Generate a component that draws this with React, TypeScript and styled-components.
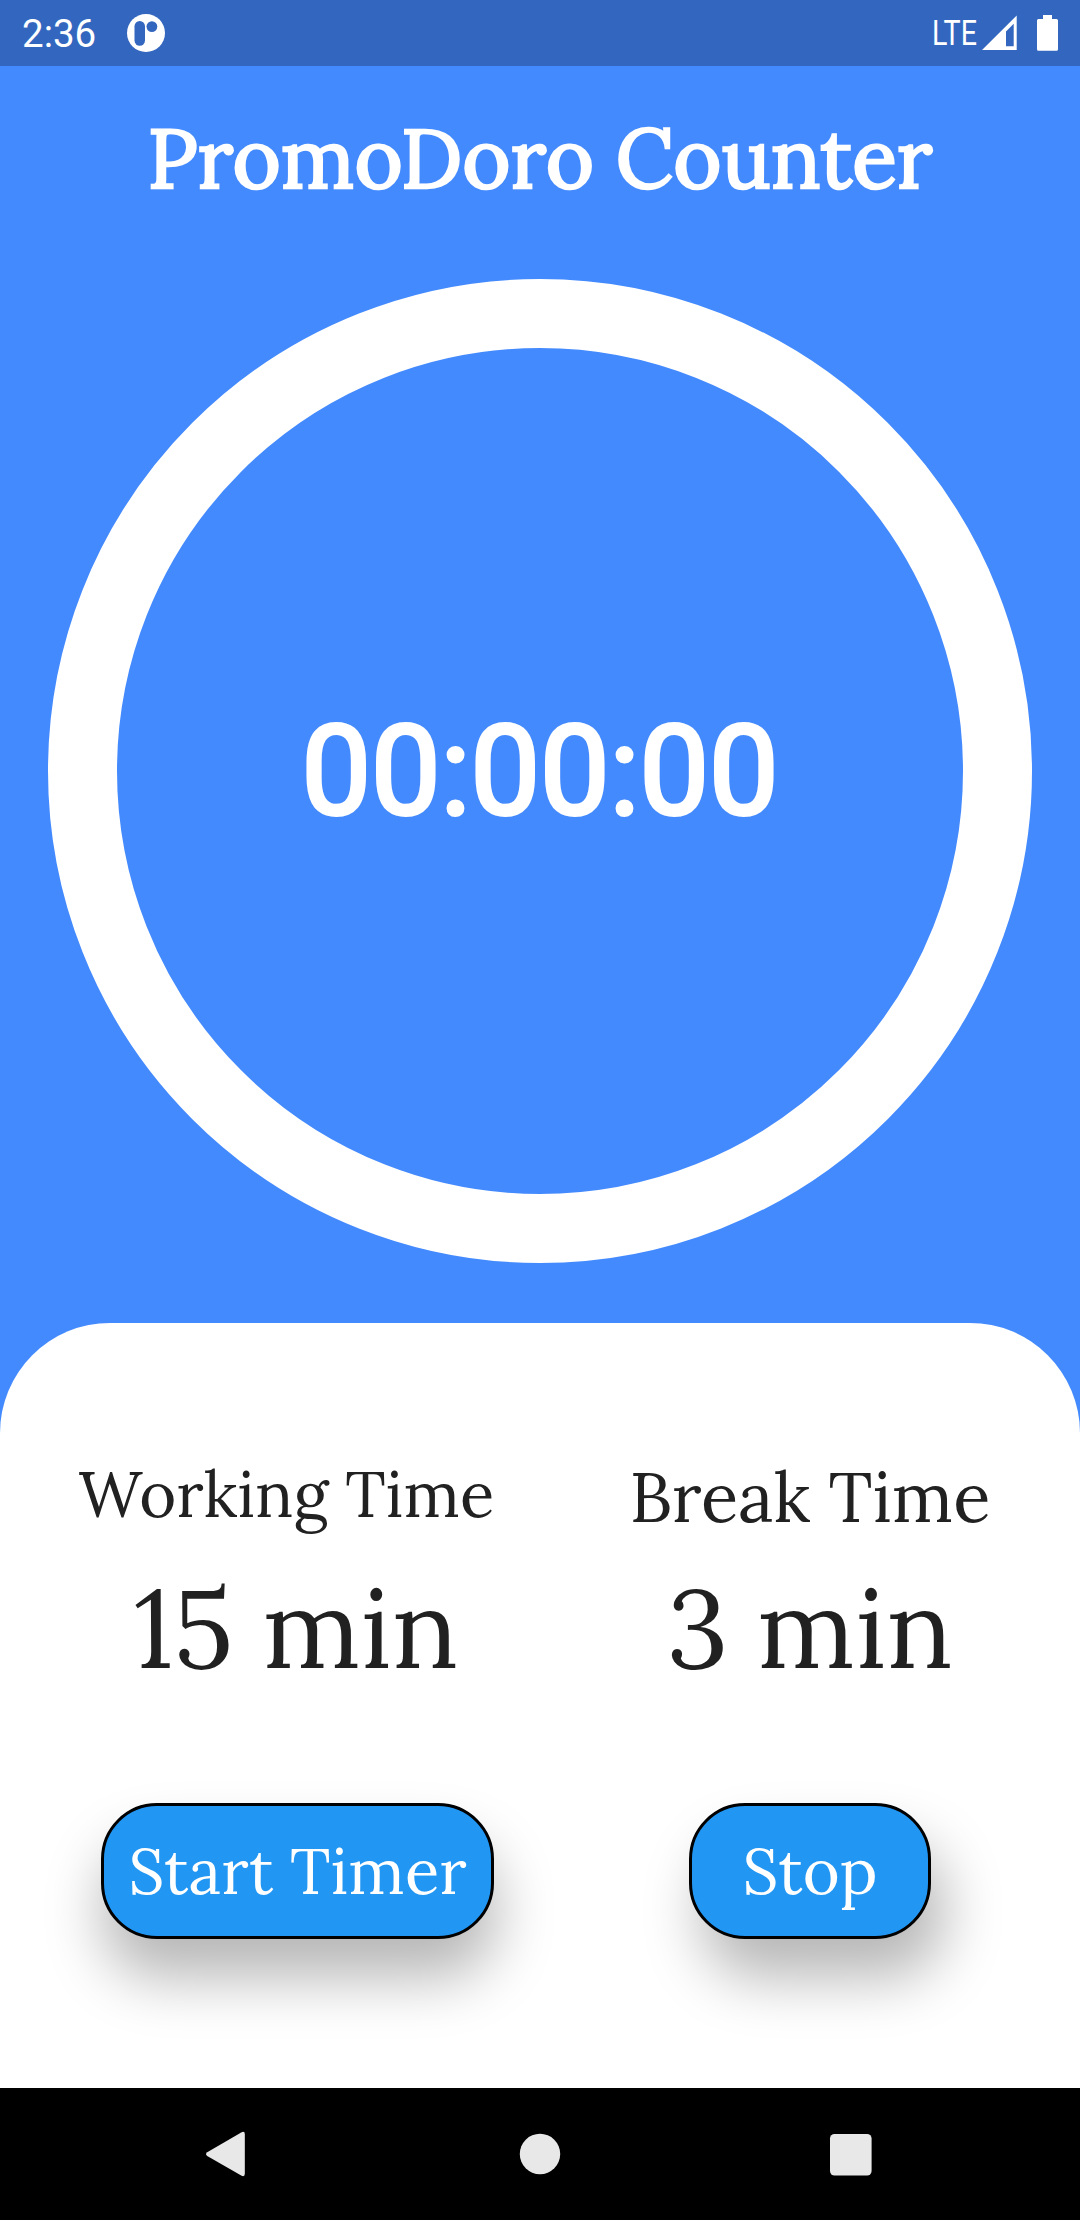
import React from "react";
import styled, { createGlobalStyle } from "styled-components";

const GlobalStyle = createGlobalStyle`
  * { box-sizing: border-box; }
  body { margin: 0; background: #448aff; }
`;

const serif = `Lora, "Liberation Serif", serif`;
const sans = `Roboto, sans-serif`;

const Screen = styled.div`
  width: 1080px;
  height: 2220px;
  display: flex;
  flex-direction: column;
  background: #448aff;
  overflow: hidden;
`;

const StatusBar = styled.header`
  height: 66px;
  flex: none;
  display: flex;
  align-items: center;
  padding: 0 22px;
  background: #3367bf;
  color: #fff;
  font-family: ${sans};
`;

const Clock = styled.span`
  width: 105px;
  font-size: 38.5px;
  line-height: 66px;
  padding-top: 2px;
`;

const Network = styled.span`
  width: 50px;
  margin-left: auto;
  font-size: 34.5px;
  line-height: 66px;
  transform: scaleX(0.83);
  transform-origin: left center;
`;

const SignalIcon = styled.svg`
  width: 35px;
  height: 66px;
  margin-right: 20px;
`;

const BatteryIcon = styled.svg`
  width: 21px;
  height: 66px;
`;

const AppIcon = styled.svg`
  width: 38px;
  height: 38px;
`;

const Hero = styled.main`
  height: 1257px;
  flex: none;
  display: flex;
  flex-direction: column;
  align-items: center;
  padding-top: 42px;
  color: #fff;
`;

const Title = styled.h1`
  margin: 0 0 71px;
  font: 400 82.5px/100px ${serif};
  white-space: nowrap;
  -webkit-text-stroke: 2.6px #fff;
`;

const Ring = styled.div`
  width: 984px;
  height: 984px;
  border: 69px solid #fff;
  border-radius: 50%;
  display: flex;
  align-items: center;
  justify-content: center;
`;

const Countdown = styled.span`
  padding-top: 2px;
  font: 400 123.75px/150px ${sans};
  -webkit-text-stroke: 3.87px #fff;
`;

const Panel = styled.section`
  height: 765px;
  flex: none;
  display: grid;
  grid-template-columns: 595px 430px;
  padding-top: 126px;
  background: #fff;
  border-radius: 110px 110px 0 0;
  color: #212121;
  font-family: ${serif};
`;

const Column = styled.div`
  display: flex;
  flex-direction: column;
  align-items: center;
`;

const Label = styled.div<{ $size: number; $top?: number; $shift?: number }>`
  height: 119px;
  padding-top: ${(p) => p.$top ?? 0}px;
  margin-right: ${(p) => p.$shift ?? 0}px;
  font-size: ${(p) => p.$size}px;
  line-height: 90px;
  white-space: nowrap;
`;

const Value = styled.div<{ $shift?: number }>`
  margin-right: ${(p) => p.$shift ?? 0}px;
  font-size: 110px;
  line-height: 120px;
  white-space: nowrap;
`;

const ActionButton = styled.button<{ $width: number; $shadowX: number }>`
  width: ${(p) => p.$width}px;
  height: 136px;
  margin-top: 115px;
  padding: 0;
  border: 3px solid #000;
  border-radius: 56px;
  background: #2196f3;
  color: #fff;
  font: 400 63.25px/130px ${serif};
  white-space: nowrap;
  box-shadow: ${(p) => p.$shadowX}px 39px 58px rgba(0, 0, 0, 0.285);
`;

const NavBar = styled.nav`
  height: 132px;
  flex: none;
  display: flex;
  align-items: center;
  justify-content: space-between;
  padding: 0 206px;
  background: #000;
`;

const NavIcon = styled.svg`
  width: 46px;
  height: 46px;
  fill: #e8e8e8;
  overflow: visible;
`;

export default function App() {
  return (
    <>
      <GlobalStyle />
      <Screen>
        <StatusBar>
          <Clock>2:36</Clock>
          <AppIcon viewBox="0 0 38 38">
            <circle cx="19" cy="19" r="19" fill="#fff" />
            <rect x="7.5" y="7" width="10.5" height="24.7" rx="5.2" fill="#3367bf" />
            <circle cx="24.9" cy="12.6" r="5.4" fill="#3367bf" />
          </AppIcon>
          <Network>LTE</Network>
          <SignalIcon viewBox="0 0 35 66">
            <path
              fill="#fff"
              fillRule="evenodd"
              d="M0 50 L34.7 15.5 V50 Z M24 31.5 V46.2 H31.7 V23.8 Z"
            />
          </SignalIcon>
          <BatteryIcon viewBox="0 0 21 66">
            <path
              fill="#fff"
              d="M6 15 H15 V19 H19.5 Q21 19 21 20.5 V49.3 Q21 50.8 19.5 50.8 H1.5 Q0 50.8 0 49.3 V20.5 Q0 19 1.5 19 H6 Z"
            />
          </BatteryIcon>
        </StatusBar>

        <Hero>
          <Title>PromoDoro Counter</Title>
          <Ring>
            <Countdown>00:00:00</Countdown>
          </Ring>
        </Hero>

        <Panel>
          <Column>
            <Label $size={63.25} $shift={22}>Working Time</Label>
            <Value $shift={3}>15 min</Value>
            <ActionButton $width={393} $shadowX={2}>Start Timer</ActionButton>
          </Column>
          <Column>
            <Label $size={68.75} $top={3}>Break Time</Label>
            <Value>3 min</Value>
            <ActionButton $width={242} $shadowX={13}>Stop</ActionButton>
          </Column>
        </Panel>

        <NavBar>
          <NavIcon viewBox="0 0 46 46">
            <path d="M1.2 21.3 L35.2 1.4 Q38.8 -0.6 38.8 3.2 V42.8 Q38.8 46.6 35.2 44.6 L1.2 25.1 Q-1.2 23.2 1.2 21.3 Z" />
          </NavIcon>
          <NavIcon viewBox="0 0 46 46">
            <circle cx="23" cy="23" r="20.2" />
          </NavIcon>
          <NavIcon viewBox="0 0 46 46">
            <rect x="2" y="3" width="41.6" height="41.5" rx="4.5" />
          </NavIcon>
        </NavBar>
      </Screen>
    </>
  );
}
